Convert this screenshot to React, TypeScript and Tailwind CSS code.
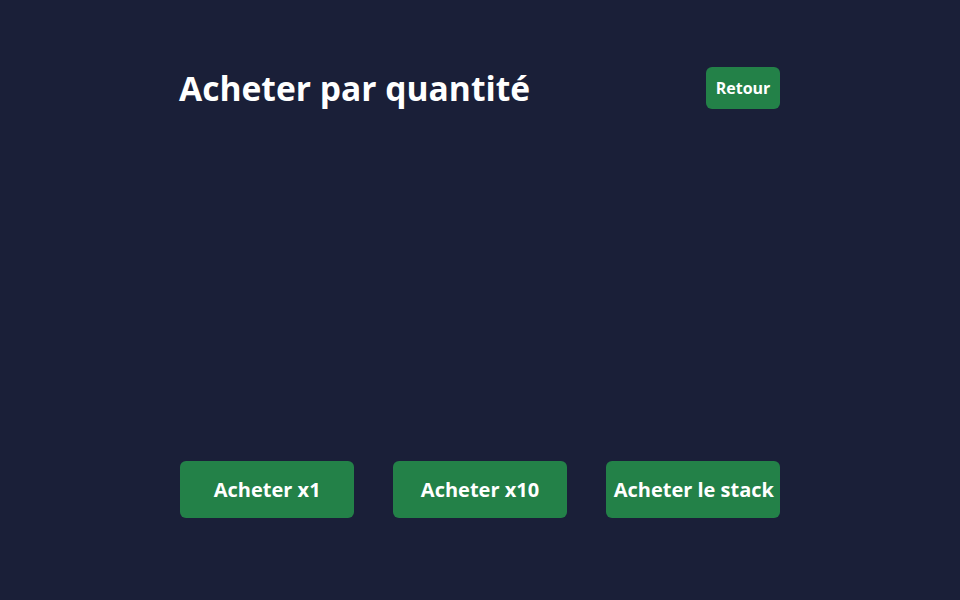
export default function App() {
  const options = ["Acheter x1", "Acheter x10", "Acheter le stack"];

  return (
    <div
      className="flex h-screen flex-col bg-[#1a1f38] pt-[67px] pb-[82px] text-white"
      style={{ fontFamily: '"Open Sans", "Noto Sans", sans-serif' }}
    >
      <div className="mx-auto flex w-[600px] flex-1 flex-col">
        <header className="flex items-center justify-between">
          <h1 className="ml-[-1px] text-[33.6px] leading-[42px] font-bold">
            Acheter par quantité
          </h1>
          <button className="h-[42px] w-[74px] rounded-md bg-[#238148] text-[16px] font-bold">
            Retour
          </button>
        </header>

        <div className="flex-1" />

        <div className="grid grid-cols-3 gap-[38.5px]">
          {options.map((label) => (
            <button
              key={label}
              className="h-[57px] rounded-md bg-[#238148] px-2 text-[20px] font-bold whitespace-nowrap"
            >
              {label}
            </button>
          ))}
        </div>
      </div>
    </div>
  );
}
